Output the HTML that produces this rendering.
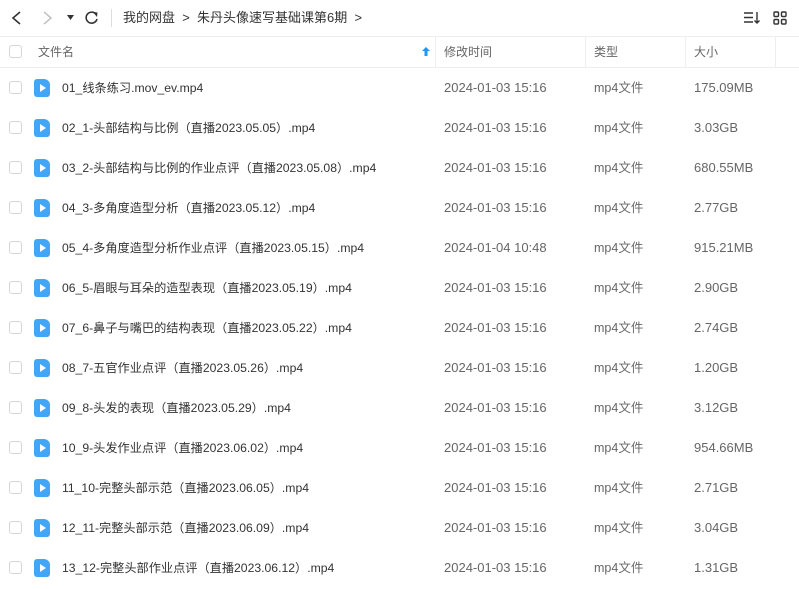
<!DOCTYPE html>
<html><head><meta charset="utf-8"><style>
*{margin:0;padding:0;box-sizing:border-box}
body{width:799px;height:589px;overflow:hidden;background:#fff;font-family:"Liberation Sans","Noto Sans CJK SC",sans-serif;color:#333;position:relative}
.top{position:absolute;top:0;left:0;width:799px;height:37px;border-bottom:1px solid #eee}
.ab{position:absolute}
.hdr{position:absolute;top:37px;left:0;width:799px;height:31px;border-bottom:1px solid #eee;font-size:12px;color:#666}
.hdr span{position:absolute;top:0;line-height:30px}
.cb{position:absolute;left:9px;width:13px;height:13px;border:1px solid #d6d6d6;border-radius:3px;background:#fff}
.row{position:absolute;left:0;width:799px;height:40px;font-size:12.5px}
.row span{position:absolute;top:0;line-height:40px;white-space:nowrap}
.row span.f{font-size:12.2px}
.row span.n{font-size:13px}
.ic{position:absolute;left:34px;top:11px;width:16px;height:18px;background:#42a5f5;border-radius:3px 6px 3px 3px}
.ic:after{content:"";position:absolute;left:6px;top:5px;border-left:6px solid #fff;border-top:4px solid transparent;border-bottom:4px solid transparent}
.div{position:absolute;top:0;width:1px;height:30px;background:#eee}
</style></head><body>
<div class="top">
<svg class="ab" style="left:10px;top:10px" width="14" height="16"><path d="M10 2L3 8l7 6" stroke="#333" stroke-width="1.6" fill="none"/></svg>
<svg class="ab" style="left:40px;top:10px" width="14" height="16"><path d="M4 2l7 6-7 6" stroke="#bbb" stroke-width="1.4" fill="none"/></svg>
<svg class="ab" style="left:67px;top:15px" width="8" height="6"><path d="M0 0h7L3.5 5z" fill="#333"/></svg>
<svg class="ab" style="left:84px;top:10px" width="16" height="16"><path d="M12.5 5A5.5 5.5 0 1 0 13 9" stroke="#333" stroke-width="1.6" fill="none"/><path d="M9 2l4.5 .5-.5 4.5z" fill="#333"/></svg>
<div class="ab" style="left:111px;top:9px;width:1px;height:18px;background:#ddd"></div>
<div class="ab" style="left:123px;top:0;line-height:36px;font-size:13px;color:#333;white-space:nowrap">我的网盘 &nbsp;&gt;&nbsp; 朱丹头像速写基础课第6期 &nbsp;&gt;</div>
<svg class="ab" style="left:743px;top:11px" width="18" height="14"><path d="M1 2h9M1 6.5h9M1 11h9M14 1v11M11.5 9.5L14 12l2.5-2.5" stroke="#333" stroke-width="1.4" fill="none"/></svg>
<svg class="ab" style="left:773px;top:11px" width="14" height="14"><g stroke="#333" stroke-width="1.4" fill="none"><rect x="1" y="1" width="4.5" height="4.5" rx="1"/><rect x="8.5" y="1" width="4.5" height="4.5" rx="1"/><rect x="1" y="8.5" width="4.5" height="4.5" rx="1"/><rect x="8.5" y="8.5" width="4.5" height="4.5" rx="1"/></g></svg>
</div>
<div class="hdr">
<div class="cb" style="top:8px"></div>
<span style="left:38px">文件名</span>
<svg class="ab" style="left:422px;top:10px" width="8" height="10"><path d="M4 0L0 4h2.5v5h3V4H8z" fill="#2196f3"/></svg>
<div class="div" style="left:435px"></div><span style="left:444px">修改时间</span>
<div class="div" style="left:585px"></div><span style="left:594px">类型</span>
<div class="div" style="left:685px"></div><span style="left:694px">大小</span>
<div class="div" style="left:775px"></div>
</div>
<div id="rows"></div>
<script>
var d=[["01_线条练习.mov_ev.mp4","2024-01-03 15:16","175.09MB"],
["02_1-头部结构与比例（直播2023.05.05）.mp4","2024-01-03 15:16","3.03GB"],
["03_2-头部结构与比例的作业点评（直播2023.05.08）.mp4","2024-01-03 15:16","680.55MB"],
["04_3-多角度造型分析（直播2023.05.12）.mp4","2024-01-03 15:16","2.77GB"],
["05_4-多角度造型分析作业点评（直播2023.05.15）.mp4","2024-01-04 10:48","915.21MB"],
["06_5-眉眼与耳朵的造型表现（直播2023.05.19）.mp4","2024-01-03 15:16","2.90GB"],
["07_6-鼻子与嘴巴的结构表现（直播2023.05.22）.mp4","2024-01-03 15:16","2.74GB"],
["08_7-五官作业点评（直播2023.05.26）.mp4","2024-01-03 15:16","1.20GB"],
["09_8-头发的表现（直播2023.05.29）.mp4","2024-01-03 15:16","3.12GB"],
["10_9-头发作业点评（直播2023.06.02）.mp4","2024-01-03 15:16","954.66MB"],
["11_10-完整头部示范（直播2023.06.05）.mp4","2024-01-03 15:16","2.71GB"],
["12_11-完整头部示范（直播2023.06.09）.mp4","2024-01-03 15:16","3.04GB"],
["13_12-完整头部作业点评（直播2023.06.12）.mp4","2024-01-03 15:16","1.31GB"]];
var h="";d.forEach(function(r,i){h+='<div class="row" style="top:'+(68+i*40)+'px"><div class="cb" style="top:13px"></div><div class="ic"></div><span class="f" style="left:62px;color:#333">'+r[0]+'</span><span class="n" style="left:444px;color:#666">'+r[1]+'</span><span style="left:594px;color:#666">mp4文件</span><span class="n" style="left:694px;color:#666">'+r[2]+'</span></div>'});
document.getElementById("rows").innerHTML=h;
</script>
</body></html>
